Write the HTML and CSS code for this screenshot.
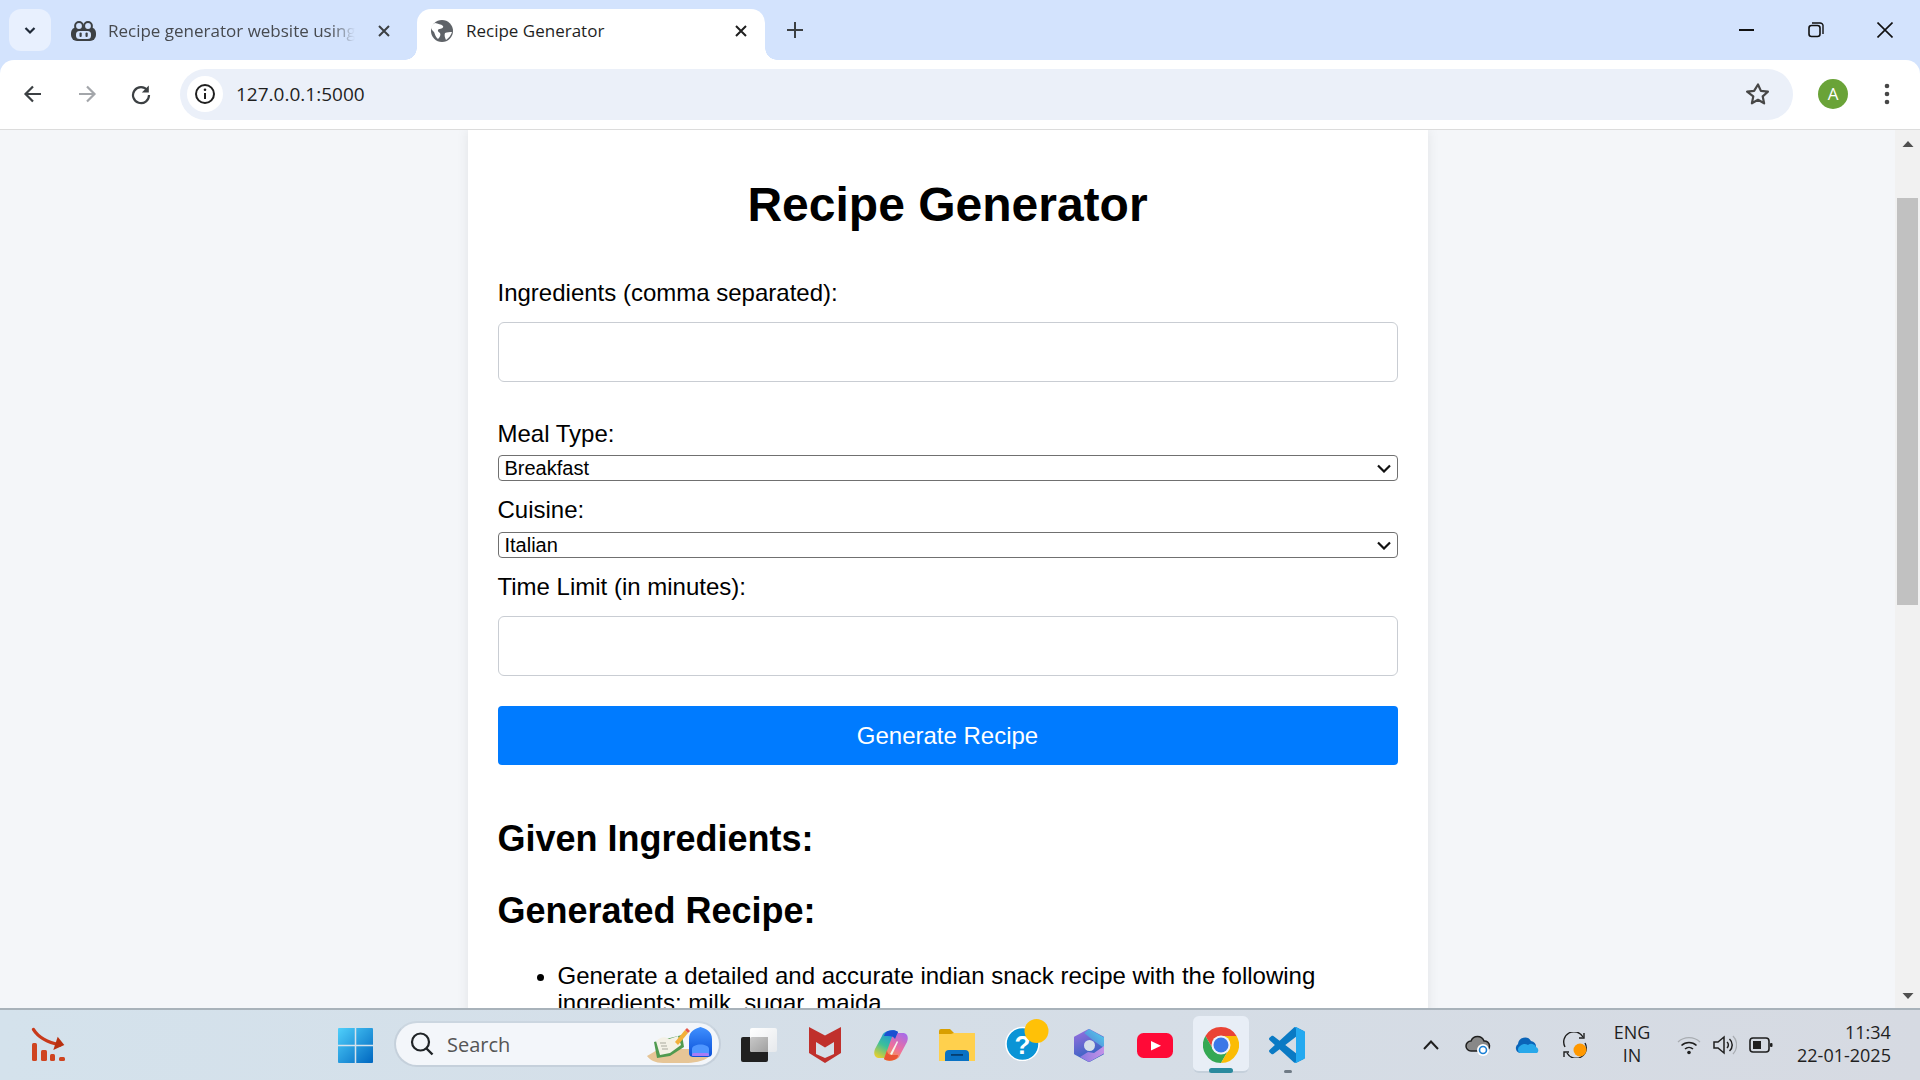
FILE: index.html
```html
<!DOCTYPE html>
<html lang="en">
<head>
<meta charset="utf-8">
<title>Recipe Generator</title>
<link rel="stylesheet" href="styles.css">
</head>
<body>
<div class="tabstrip">
  <div class="tab-search"><svg width="16" height="16" viewBox="0 0 16 16"><path d="M3.5 6L8 10.5 12.5 6" fill="none" stroke="#1f2937" stroke-width="2.2"/></svg></div>
  <div class="tab tab-inactive">
    <svg class="fav" width="25" height="20" viewBox="0 0 25 20"><rect y="6" width="25" height="14" rx="6" fill="#3c4043"/><circle cx="8" cy="5" r="3.9" fill="#d3e3fd" stroke="#3c4043" stroke-width="2"/><circle cx="17" cy="5" r="3.9" fill="#d3e3fd" stroke="#3c4043" stroke-width="2"/><rect x="5" y="10" width="15" height="8" rx="3.5" fill="#d3e3fd"/><rect x="8.5" y="11.5" width="2.2" height="4.5" rx="1" fill="#3c4043"/><rect x="14.5" y="11.5" width="2.2" height="4.5" rx="1" fill="#3c4043"/></svg>
    <span class="tab-title">Recipe generator website using</span>
    <svg class="close" width="14" height="14" viewBox="0 0 14 14"><path d="M2 2l10 10M12 2L2 12" stroke="#3c4043" stroke-width="2"/></svg>
  </div>
  <div class="tab tab-active">
    <svg class="fav" width="24" height="24" viewBox="0 0 24 24"><circle cx="12" cy="12" r="11" fill="#5f6368"/><path d="M5 4c3 1 6 1 8 3 1 2-2 3-4 3-2 1-1 3 1 4 1 2 0 4-2 6-3-3-3-5-4-7-2-2-3-3-3-5 1-2 2-3 4-4zM15 14c2-1 5-1 7-1-1 3-3 6-6 8-1-2-2-5-1-7z" fill="#fff"/></svg>
    <span class="tab-title tab-title-on">Recipe Generator</span>
    <svg class="close" width="14" height="14" viewBox="0 0 14 14"><path d="M2 2l10 10M12 2L2 12" stroke="#1f1f1f" stroke-width="2"/></svg>
  </div>
  <svg class="newtab" width="18" height="18" viewBox="0 0 18 18"><path d="M9 1v16M1 9h16" stroke="#3c4043" stroke-width="2"/></svg>
  <div class="winctl">
    <svg width="16" height="16" viewBox="0 0 16 16"><path d="M0 8h15" stroke="#111" stroke-width="2"/></svg>
    <svg width="16" height="16" viewBox="0 0 16 16"><rect x="1" y="3.5" width="11" height="11" rx="2.5" fill="none" stroke="#111" stroke-width="1.6"/><path d="M4 1h7.5A3 3 0 0 1 15 4.5V12" fill="none" stroke="#111" stroke-width="1.4"/></svg>
    <svg width="16" height="16" viewBox="0 0 16 16"><path d="M.5.5l15 15M15.5.5l-15 15" stroke="#111" stroke-width="1.6"/></svg>
  </div>
</div>

<div class="toolbar">
  <svg class="nav" width="22" height="22" viewBox="0 0 22 22"><path d="M19 11H4M11 3.5L3.5 11l7.500 7.500" fill="none" stroke="#3c4043" stroke-width="2.2"/></svg>
  <svg class="nav" width="22" height="22" viewBox="0 0 22 22"><path d="M3 11h15M11 3.5l7.500 7.500-7.500 7.500" fill="none" stroke="#a3a6aa" stroke-width="2.2"/></svg>
  <svg class="nav" width="22" height="22" viewBox="0 0 22 22"><path d="M17.5 7.5A8 8 0 1 0 19 12" fill="none" stroke="#3c4043" stroke-width="2.2"/><path d="M18.8 2.5v7h-7z" fill="#3c4043"/></svg>
  <div class="omnibox">
    <div class="site-info"><svg width="22" height="22" viewBox="0 0 22 22"><circle cx="11" cy="11" r="9" fill="none" stroke="#1f1f1f" stroke-width="2"/><path d="M11 10v6" stroke="#1f1f1f" stroke-width="2"/><circle cx="11" cy="6.8" r="1.3" fill="#1f1f1f"/></svg></div>
    <span class="url">127.0.0.1:5000</span>
    <svg class="star" width="24" height="24" viewBox="0 0 24 24"><path d="M12 2.5l2.9 6.4 7 .8-5.200 4.700 1.400 6.900-6.100-3.500-6.100 3.500 1.400-6.900L1.100 9.700l7-.8z" fill="none" stroke="#474747" stroke-width="2.2" stroke-linejoin="round"/></svg>
  </div>
  <div class="avatar">A</div>
  <svg class="kebab" width="6" height="24" viewBox="0 0 6 24"><circle cx="3" cy="4" r="2.3" fill="#474747"/><circle cx="3" cy="12" r="2.3" fill="#474747"/><circle cx="3" cy="20" r="2.3" fill="#474747"/></svg>
</div>

<div class="viewport">
  <main class="page">
    <div class="card">
      <h1>Recipe Generator</h1>
      <form class="recipe-form">
        <label class="lbl-first">Ingredients (comma separated):</label>
        <input class="field" type="text">
        <label class="lbl-meal">Meal Type:</label>
        <div class="select-wrap">
          <select class="choice"><option>Breakfast</option></select>
          <svg class="select-arrow" width="14" height="9" viewBox="0 0 14 9"><path d="M1 1.5l6 6 6-6" fill="none" stroke="#111" stroke-width="2.2"/></svg>
        </div>
        <label class="lbl-cuisine">Cuisine:</label>
        <div class="select-wrap">
          <select class="choice"><option>Italian</option></select>
          <svg class="select-arrow" width="14" height="9" viewBox="0 0 14 9"><path d="M1 1.5l6 6 6-6" fill="none" stroke="#111" stroke-width="2.2"/></svg>
        </div>
        <label class="lbl-time">Time Limit (in minutes):</label>
        <input class="field" type="text">
        <button class="submit" type="button">Generate Recipe</button>
      </form>
      <h2 class="h-given">Given Ingredients:</h2>
      <h2 class="h-recipe">Generated Recipe:</h2>
      <ul class="steps"><li>Generate a detailed and accurate indian snack recipe with the following ingredients: milk, sugar, maida</li></ul>
    </div>
  </main>
  <div class="scrollbar">
    <svg width="14" height="8" viewBox="0 0 14 8"><path d="M1.5 7L7 1l5.500 6z" fill="#505050"/></svg>
    <div class="thumb"></div>
    <svg class="sb-down" width="14" height="8" viewBox="0 0 14 8"><path d="M1.5 1L7 7l5.500-6z" fill="#505050"/></svg>
  </div>
</div>

<footer class="taskbar">
  <svg class="tb-logo" width="40" height="40" viewBox="0 0 40 40"><path d="M5.5 4.5C10 12 18 17 32 20" fill="none" stroke="#c8391a" stroke-width="3.4" stroke-linecap="round"/><path d="M29.7 11.7L36.3 20 25.3 25z" fill="#b8300f"/><g fill="#cf4420"><rect x="4" y="18" width="5" height="18" rx="1.5"/><rect x="13" y="25" width="6" height="11" rx="1.5"/><rect x="22" y="29" width="5" height="7" rx="1.5"/><rect x="31" y="32" width="6" height="4" rx="1.5"/></g></svg>
  <svg class="tb-win" width="35" height="35" viewBox="0 0 35 35"><defs><linearGradient id="w" x1="0" y1="0" x2="1" y2="1"><stop offset="0" stop-color="#4fd0fb"/><stop offset="1" stop-color="#0067c0"/></linearGradient></defs><rect width="35" height="35" rx="1" fill="url(#w)"/><path d="M17.5 0v35M0 17.5h35" stroke="#d5e2ec" stroke-width="1.5"/></svg>
  <div class="searchbox">
    <svg width="26" height="26" viewBox="0 0 26 26"><circle cx="11.5" cy="11" r="8.5" fill="none" stroke="#1f2326" stroke-width="2.2"/><path d="M17.5 17.5l6 6" stroke="#1f2326" stroke-width="2.4"/></svg>
    <span class="search-text">Search</span>
    <svg class="search-art" width="70" height="40" viewBox="0 0 70 40"><defs><linearGradient id="bag" x1="0" y1="0" x2="0" y2="1"><stop offset="0" stop-color="#3f90ff"/><stop offset="1" stop-color="#0b50d8"/></linearGradient></defs><path d="M2 31L14 24H55L65 31C58 37 48 38 40 38H18C10 38 5 35 2 31Z" fill="#e6c596"/><path d="M9 17L12 33 25 31 39 22 37 10Z" fill="#4f9a4f"/><path d="M11 16L15 30 25 28 36 20 33 11 24 14C20 11 15 12 11 16Z" fill="#f3f1e6"/><path d="M15 18l6 0M16 21l6 0M17 24l6 0" stroke="#a9a99d" stroke-width="1"/><path d="M30 17L40 5 43 8 33 20Z" fill="#f2b03a"/><path d="M40 5l2-2 3 3-2 2z" fill="#e8584a"/><path d="M44 14C44 6 50 4 55.5 2 61 4 67 6 67 14V28C67 31 65 32 62 32H49C46 32 44 31 44 28Z" fill="url(#bag)"/><path d="M47 31V24C47 18 64 18 64 24V31Z" fill="#4f96ff"/><rect x="47" y="28" width="17" height="3" rx="1.5" fill="#a77cf5"/></svg>
  </div>
  <div class="tb-apps">
    <div class="app"><svg width="36" height="34" viewBox="0 0 36 34"><defs><linearGradient id="tv" x1="0" y1="0" x2="1" y2="1"><stop offset="0" stop-color="#fff"/><stop offset="1" stop-color="#e6e9ec"/></linearGradient><linearGradient id="tv2" x1="0" y1="0" x2="1" y2="1"><stop offset="0" stop-color="#c8c8c8"/><stop offset="1" stop-color="#a0a0a0"/></linearGradient></defs><rect y="9" width="27" height="25" rx="2" fill="#202020"/><rect x="9" width="27" height="24" rx="2" fill="url(#tv)"/><path d="M9 11a2 2 0 0 1 2-2h16v15H11a2 2 0 0 1-2-2z" fill="url(#tv2)"/></svg></div>
    <div class="app"><svg width="32" height="36" viewBox="0 0 32 36"><path fill-rule="evenodd" d="M0 0L16 8.5 32 0V26L16 36 0 26ZM7 15V27L16 31 25 27V15L16 20.5Z" fill="#c0302c"/></svg></div>
    <div class="app"><svg width="34" height="31" viewBox="0 0 34 31"><defs><linearGradient id="cp1" x1=".7" y1="0" x2=".2" y2="1"><stop offset="0" stop-color="#1b8fe6"/><stop offset=".55" stop-color="#3cc09a"/><stop offset="1" stop-color="#e6cf2e"/></linearGradient><linearGradient id="cp2" x1=".8" y1="0" x2=".3" y2="1"><stop offset="0" stop-color="#a86be8"/><stop offset=".55" stop-color="#ee6f9e"/><stop offset="1" stop-color="#f8a03a"/></linearGradient></defs><path d="M14 1C17 0 22 0 24 2L16 24C15 27 13 28 10 28H5C1 28-1 24 1 19L8 6C9 3 11 2 14 1Z" fill="url(#cp1)"/><path d="M20 30C17 31 12 31 10 29L18 7C19 4 21 3 24 3H29C33 3 35 7 33 12L26 25C25 28 23 29 20 30Z" fill="url(#cp2)"/><path d="M14 1C17 0 22 0 24 2L21 9C20 7 18 6 14 6H10C11 3 12 2 14 1Z" fill="#1b4fd1"/><path d="M10 29C12 31 17 31 20 30 23 29 24 27 24 25H18C15 25 13 23 13 20Z" fill="#ea5434"/><path d="M16 24L23 11 24 12 18 25Z" fill="#f4f6ee"/></svg></div>
    <div class="app"><svg width="36" height="32" viewBox="0 0 36 32"><path d="M0 2a2 2 0 0 1 2-2h9l4 4h19a2 2 0 0 1 2 2v4H0z" fill="#d99f00"/><path d="M0 5H12l3-1H35a1 1 0 0 1 1 1V32H0z" fill="#ffd04d"/><path d="M6 32V25a4 4 0 0 1 4-4H26a4 4 0 0 1 4 4v7z" fill="#0a72c4"/><rect x="12" y="25" width="12" height="1.8" fill="#053e6f"/></svg></div>
    <div class="app app-help"><svg width="44" height="42" viewBox="0 0 44 42"><circle cx="17.5" cy="25" r="16.5" fill="#0a94d6" stroke="#fff" stroke-width="1.5"/><text x="17.5" y="35" class="help-mark">?</text><circle cx="31.5" cy="12" r="12" fill="#ffc107"/></svg></div>
    <div class="app"><svg width="30" height="33" viewBox="0 0 30 33"><defs><linearGradient id="m1" x1="0" y1="0" x2=".4" y2="1"><stop offset="0" stop-color="#9a6fe0"/><stop offset="1" stop-color="#2f62c0"/></linearGradient><linearGradient id="m2" x1="1" y1="0" x2="0" y2="1"><stop offset="0" stop-color="#50d8f0"/><stop offset="1" stop-color="#5a6fd0"/></linearGradient><linearGradient id="m3" x1="0" y1="0" x2="1" y2="0"><stop offset="0" stop-color="#8a78e0"/><stop offset="1" stop-color="#c493e8"/></linearGradient></defs><path d="M15 1L29 8.5V24.5L15 32 1 24.5V8.5Z" fill="url(#m1)" stroke="url(#m1)" stroke-width="2" stroke-linejoin="round"/><path d="M15 0L30 8.5V19L20 12 10 4Z" fill="url(#m2)"/><path d="M30 17V24.5L15 33 6 28 14 23 20 24Z" fill="url(#m3)"/><circle cx="15.500" cy="16.500" r="5.500" fill="#d4dfe9"/></svg></div>
    <div class="app"><svg width="36" height="25" viewBox="0 0 36 25"><rect width="36" height="25" rx="6.5" fill="#ff0a37"/><path d="M14 8l10 4.700-10 4.700z" fill="#fff"/></svg></div>
    <div class="app app-on"><svg width="36" height="36" viewBox="0 0 36 36"><path d="M18 0A18 18 0 0 1 33.6 9H18A9 9 0 0 0 10.2 22.5L2.4 9A18 18 0 0 1 18 0Z" fill="#ea4335"/><path d="M2.4 9L10.2 22.5A9 9 0 0 0 25.8 22.5L18 36A18 18 0 0 1 2.4 9Z" fill="#34a853"/><path d="M33.6 9H18A9 9 0 0 1 25.8 22.5L18 36A18 18 0 0 0 33.6 9Z" fill="#fbbc04"/><circle cx="18" cy="18" r="9.5" fill="#eef2f8"/><circle cx="18" cy="18" r="7.5" fill="#3b78e7"/></svg></div>
    <div class="app app-run"><svg width="36" height="36" viewBox="0 0 100 100"><path fill-rule="evenodd" d="M70.9 99.3c1.6.6 3.4.6 5-.2l20.6-9.9c2.200-1 3.500-3.200 3.500-5.600V16.400c0-2.400-1.400-4.600-3.500-5.600L75.900.9c-2-1-4.500-.8-6.400.6-.3.200-.5.400-.8.700L29.400 38 12.200 25c-1.600-1.200-3.800-1.100-5.300.2l-5.500 5c-1.800 1.700-1.800 4.500 0 6.200L16.300 50 1.400 63.600c-1.800 1.700-1.800 4.500 0 6.200l5.500 5c1.500 1.300 3.700 1.400 5.300.2l17.200-13 39.300 35.800c.6.600 1.300 1.100 2.200 1.500zM75 27.300L45.200 50 75 72.700z" fill="#0a7ac4"/><path d="M70.900 99.300c1.600.6 3.400.6 5-.2l20.600-9.900c2.200-1 3.500-3.200 3.500-5.600V16.400c0-2.400-1.400-4.600-3.500-5.600L75.900.9c-2-1-4.500-.8-6.400.6C72 .5 75 2 75 6v88c0 3-2 5-4.100 5.300z" fill="#24a9f0"/></svg></div>
  </div>
  <div class="tray">
    <svg class="tr-chev" width="18" height="12" viewBox="0 0 18 12"><path d="M2 10L9 2.500 16 10" fill="none" stroke="#1f1f1f" stroke-width="2"/></svg>
    <svg class="tr-cloud" width="26" height="22" viewBox="0 0 26 22"><path d="M6 17A5 5 0 0 1 6 7 7 7 0 0 1 19 7 5 5 0 0 1 20 17Z" fill="#888" stroke="#1f1f1f" stroke-width="1.5"/><circle cx="18" cy="16" r="6" fill="#fff"/><circle cx="18" cy="16" r="3.5" fill="none" stroke="#1a7fd4" stroke-width="1.6"/></svg>
    <svg class="tr-drive" width="26" height="18" viewBox="0 0 26 18"><path d="M6 17A5 5 0 0 1 4 8 7 7 0 0 1 17 5 6 6 0 0 1 22 11L12 17Z" fill="#0a64b8"/><path d="M6 17A4 4 0 0 1 6 10 6 6 0 0 1 14 9 5 5 0 0 1 22 11 3.5 3.5 0 0 1 23 17Z" fill="#28a8ea"/></svg>
    <svg class="tr-sync" width="26" height="26" viewBox="0 0 26 26"><path d="M3 15A10 10 0 0 1 21 5M23 11A10 10 0 0 1 5 21" fill="none" stroke="#1f1f1f" stroke-width="1.4"/><path d="M22 1V6H17M2 25V20H7" fill="none" stroke="#1f1f1f" stroke-width="1.4"/><circle cx="18" cy="18" r="6.5" fill="#ff9800"/></svg>
    <div class="lang"><span>ENG</span><span>IN</span></div>
    <svg class="tr-wifi" width="24" height="20" viewBox="0 0 24 20"><path d="M1 7A16 16 0 0 1 23 7" fill="none" stroke="#a9adb2" stroke-width="1.3"/><path d="M4.500 10.500A11 11 0 0 1 19.500 10.500M8 14A6 6 0 0 1 16 14" fill="none" stroke="#1f1f1f" stroke-width="1.6"/><circle cx="12" cy="17.5" r="1.8" fill="#1f1f1f"/></svg>
    <svg class="tr-vol" width="24" height="22" viewBox="0 0 24 22"><path d="M1 8H5L11 3V19L5 14H1Z" fill="none" stroke="#1f1f1f" stroke-width="1.5"/><path d="M14 8A4 4 0 0 1 14 14M16.500 5A8 8 0 0 1 16.500 17" fill="none" stroke="#1f1f1f" stroke-width="1.5"/><path d="M20 2A13 13 0 0 1 20 20" fill="none" stroke="#a9adb2" stroke-width="1.3"/></svg>
    <svg class="tr-batt" width="24" height="16" viewBox="0 0 24 16"><rect x="1" y="1" width="19" height="14" rx="3" fill="none" stroke="#1f1f1f" stroke-width="1.6"/><rect x="4" y="4" width="8" height="8" fill="#1f1f1f"/><rect x="21" y="6" width="2.5" height="4" rx="1" fill="#1f1f1f"/></svg>
    <div class="clock"><span>11:34</span><span>22-01-2025</span></div>
  </div>
</footer>
</body>
</html>
```

FILE: styles.css
```css
* { box-sizing: border-box; }
html, body { margin: 0; height: 100%; }
body {
  width: 1920px;
  height: 1080px;
  overflow: hidden;
  display: flex;
  flex-direction: column;
  font-family: "Liberation Sans", Arial, sans-serif;
  background: #d3e3fd;
}
svg { display: block; flex: none; }

.tabstrip {
  height: 60px;
  flex: none;
  display: flex;
  align-items: flex-end;
  padding-left: 9px;
  background: #d3e3fd;
  font-family: "Open Sans", sans-serif;
}
.tab-search {
  width: 42px;
  height: 42px;
  margin-bottom: 9px;
  border-radius: 12px;
  background: #e8f0fe;
  display: flex;
  align-items: center;
  justify-content: center;
}
.tab {
  height: 51px;
  display: flex;
  align-items: center;
  padding-bottom: 8px;
}
.tab-inactive { width: 337px; margin-left: 19px; padding-left: 1px; }
.tab-active {
  width: 348px;
  margin-left: 10px;
  padding-left: 13px;
  background: #fff;
  border-radius: 14px 14px 0 0;
  position: relative;
}
.tab-active::before, .tab-active::after {
  content: "";
  position: absolute;
  bottom: 0;
  width: 12px;
  height: 12px;
  background: radial-gradient(circle at 0 0, #d3e3fd 11.5px, #fff 12px);
}
.tab-active::before { left: -12px; }
.tab-active::after { right: -12px; background: radial-gradient(circle at 100% 0, #d3e3fd 11.5px, #fff 12px); }
.tab-title {
  margin-left: 12px;
  width: 247px;
  font-size: 17px;
  color: #474a4f;
  white-space: nowrap;
  overflow: hidden;
  -webkit-mask-image: linear-gradient(90deg, #000 90%, transparent 100%);
  mask-image: linear-gradient(90deg, #000 90%, transparent 100%);
}
.tab-active .tab-title { width: 270px; -webkit-mask-image: none; mask-image: none; }
.tab-title-on { color: #1f1f1f; }
.close { margin-left: auto; margin-right: 17px; }
.tab-inactive .close { margin-right: 16px; }
.newtab { margin: 0 0 21px 21px; }
.winctl {
  margin-left: auto;
  height: 60px;
  display: flex;
  align-items: center;
  gap: 53px;
  padding: 0 27px 1px 0;
}

.toolbar {
  height: 70px;
  flex: none;
  display: flex;
  align-items: center;
  padding: 0 0 1px 22px;
  background: #fff;
  border-radius: 14px 14px 0 0;
  border-bottom: 1px solid #dcdcdc;
}
.nav { margin-right: 32px; }
.omnibox {
  width: 1613px;
  margin-left: -4px;
  height: 51px;
  display: flex;
  align-items: center;
  padding: 0 23px 0 7px;
  background: #ebf0f9;
  border-radius: 26px;
}
.site-info {
  width: 36px;
  height: 36px;
  border-radius: 50%;
  background: #fff;
  display: flex;
  align-items: center;
  justify-content: center;
}
.url { margin-left: 13px; font-family: "Open Sans", sans-serif; font-size: 19px; color: #1f1f1f; }
.star { margin-left: auto; }
.avatar {
  width: 30px;
  height: 30px;
  margin-left: 25px;
  border-radius: 50%;
  background: #6aa338;
  color: #fff;
  font: 17px/30px "Open Sans", sans-serif;
  text-align: center;
}
.kebab { margin-left: 36px; }

.viewport { flex: 1; min-height: 0; display: flex; background: #f4f6f9; }
.page { flex: 1; min-width: 0; overflow: hidden; display: flex; justify-content: center; }
.card {
  width: 960px;
  height: 1000px;
  padding: 47px 30px 0;
  background: #fff;
  box-shadow: 0 0 12px rgba(0, 0, 0, 0.08);
  color: #000;
}
h1 { margin: 0; font-size: 48px; line-height: 56px; text-align: center; }
.recipe-form { display: block; }
label { display: block; font-size: 24px; line-height: 28px; }
.lbl-first { margin-top: 46px; margin-bottom: 15px; }
.lbl-meal { margin-top: 38px; margin-bottom: 7px; }
.lbl-cuisine { margin-top: 15px; margin-bottom: 8px; }
.lbl-time { margin-top: 15px; margin-bottom: 15px; }
.field {
  display: block;
  width: 100%;
  height: 60px;
  background: #fff;
  border: 1px solid #c9cdd3;
  border-radius: 6px;
}
.select-wrap { position: relative; }
.choice {
  display: block;
  width: 100%;
  height: 26px;
  padding: 0 0 0 6px;
  font: 20px "Liberation Sans", Arial, sans-serif;
  color: #000;
  background: #fff;
  border: 1px solid #707070;
  border-radius: 4px;
  appearance: none;
  -webkit-appearance: none;
}
.select-arrow { position: absolute; right: 7px; top: 9px; pointer-events: none; }
.submit {
  display: block;
  width: 100%;
  height: 59px;
  margin-top: 30px;
  border: 0;
  border-radius: 4px;
  background: #007bff;
  color: #fff;
  font: 24px "Liberation Sans", Arial, sans-serif;
}
h2 { margin: 0; font-size: 36px; line-height: 42px; }
.h-given { margin-top: 53px; }
.h-recipe { margin-top: 30px; }
.steps { margin: 30px 0 0; padding: 0 0 0 60px; font-size: 24px; line-height: 27px; }

.scrollbar {
  width: 25px;
  flex: none;
  display: flex;
  flex-direction: column;
  align-items: center;
  padding-top: 10px;
  background: #f1f1f1;
}
.thumb { width: 21px; height: 407px; margin-top: 50px; background: #c1c1c1; }
.sb-down { margin-top: auto; margin-bottom: 8px; }

.taskbar {
  height: 72px;
  flex: none;
  display: flex;
  align-items: center;
  border-top: 2px solid #a8b2ba;
  background: linear-gradient(90deg, #d4e2ec, #d5dde6 60%, #d6dae2);
}
.tb-logo { margin-left: 28px; }
.tb-win { margin-left: 270px; }
.searchbox {
  width: 327px;
  height: 46px;
  margin: 0 0 2px 21px;
  padding-left: 13px;
  display: flex;
  align-items: center;
  background: #f3f6fa;
  border: 2px solid #c5d0db;
  border-top-color: #cbd6e0;
  border-radius: 23px;
}
.search-text { margin-left: 12px; font: 20px "Open Sans", sans-serif; color: #555; }
.search-art { margin-left: auto; margin-right: 4px; align-self: flex-end; }
.tb-apps { display: flex; margin-left: 5px; }
.app {
  width: 66px;
  height: 56px;
  display: flex;
  align-items: center;
  justify-content: center;
  position: relative;
}
.app-help svg { margin: -10px 0 0 8px; }
.help-mark { font: bold 26px "Liberation Sans", Arial, sans-serif; fill: #fff; text-anchor: middle; }
.app-on::before {
  content: "";
  position: absolute;
  left: 5px;
  right: 5px;
  top: -1px;
  bottom: 0;
  border-radius: 6px;
  background: #e8eef6;
  border-bottom: 2px solid #c5d0db;
}
.app-on svg { position: relative; }
.app-on::after {
  content: "";
  position: absolute;
  left: 21px;
  width: 24px;
  bottom: 0;
  height: 5px;
  border-radius: 3px;
  background: #2a8a9e;
}
.app-run::after {
  content: "";
  position: absolute;
  left: 30px;
  bottom: 0;
  width: 8px;
  height: 3px;
  border-radius: 2px;
  background: #6f7a85;
}
.tray { margin-left: 102px; display: flex; align-items: center; }
.tr-cloud { margin-left: 25px; }
.tr-drive { margin-left: 23px; }
.tr-sync { margin-left: 22px; }
.lang {
  width: 60px;
  margin-left: 14px;
  padding-bottom: 2px;
  display: flex;
  flex-direction: column;
  align-items: center;
  font: 18px/23px "Open Sans", sans-serif;
  color: #1f1f1f;
}
.tr-wifi { margin-left: 15px; }
.tr-vol { margin-left: 12px; }
.tr-batt { margin-left: 12px; }
.clock {
  margin-left: 24px;
  padding-bottom: 2px;
  display: flex;
  flex-direction: column;
  align-items: flex-end;
  font: 18px/23px "Open Sans", sans-serif;
  color: #1f1f1f;
}
```
